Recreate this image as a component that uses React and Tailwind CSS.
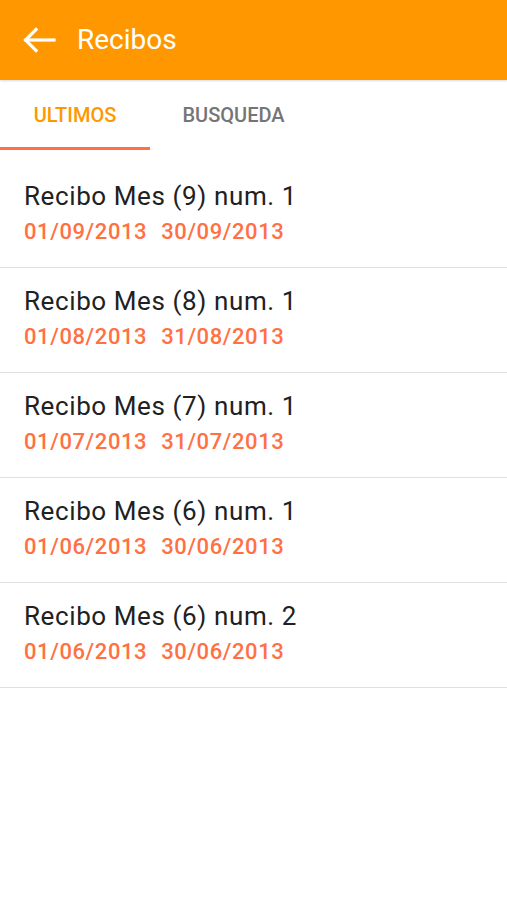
import React, { useState } from 'react';

const recibos = [
  { id: 1, title: 'Recibo Mes (9) num. 1', from: '01/09/2013', to: '30/09/2013' },
  { id: 2, title: 'Recibo Mes (8) num. 1', from: '01/08/2013', to: '31/08/2013' },
  { id: 3, title: 'Recibo Mes (7) num. 1', from: '01/07/2013', to: '31/07/2013' },
  { id: 4, title: 'Recibo Mes (6) num. 1', from: '01/06/2013', to: '30/06/2013' },
  { id: 5, title: 'Recibo Mes (6) num. 2', from: '01/06/2013', to: '30/06/2013' },
];

function BackArrow() {
  return (
    <svg width="34" height="26" viewBox="0 0 34 26" fill="none" stroke="white" strokeWidth="3.2" strokeLinecap="square">
      <path d="M4 13h28" />
      <path d="M14 2.5L3.5 13 14 23.5" />
    </svg>
  );
}

export default function App() {
  const [tab, setTab] = useState('ultimos');

  return (
    <div className="min-h-[900px] bg-white font-['Roboto',sans-serif]">
      <header className="h-20 bg-[#ff9800] flex items-center pl-[22px] shadow-[0_1px_2px_rgba(0,0,0,0.15)] relative z-10">
        <button className="flex items-center">
          <BackArrow />
        </button>
        <h1 className="ml-[21px] text-[28px] text-white leading-none">Recibos</h1>
      </header>

      <nav className="flex h-[70px] bg-white">
        <button
          onClick={() => setTab('ultimos')}
          className={`w-[150px] h-full flex items-center justify-center text-[20px] font-medium ${
            tab === 'ultimos' ? 'text-[#ff9800] border-b-[3px] border-[#ff7043] pt-[3px]' : 'text-[#757575]'
          }`}
        >
          ULTIMOS
        </button>
        <button
          onClick={() => setTab('busqueda')}
          className={`w-[167px] h-full flex items-center justify-center text-[20px] font-medium ${
            tab === 'busqueda' ? 'text-[#ff9800] border-b-[3px] border-[#ff7043] pt-[3px]' : 'text-[#757575]'
          }`}
        >
          BUSQUEDA
        </button>
      </nav>

      <ul className="pt-[13px]">
        {recibos.map(r => (
          <li key={r.id} className="px-6 pt-[18px] pb-[22px] border-b border-[#e0e0e0]">
            <p className="text-[26px] leading-[30px] tracking-[0.6px] text-[#212121]">{r.title}</p>
            <p className="mt-2 text-[22px] leading-[26px] tracking-[0.6px] font-medium text-[#ff7043]">
              <span>{r.from}</span>
              <span className="ml-[14px]">{r.to}</span>
            </p>
          </li>
        ))}
      </ul>
    </div>
  );
}
